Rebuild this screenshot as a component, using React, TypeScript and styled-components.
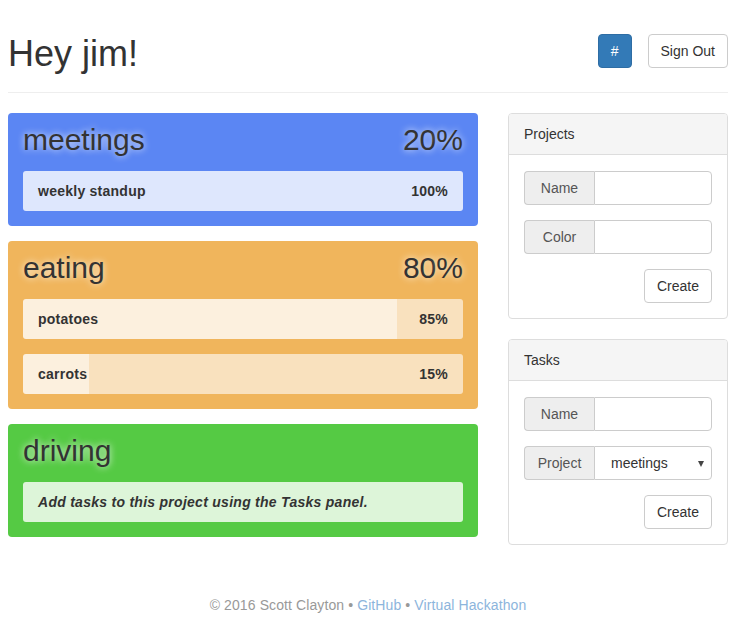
import React from "react";
import styled, { createGlobalStyle } from "styled-components";

const GlobalStyle = createGlobalStyle`
  html, body { margin: 0; padding: 0; background: #fff; }
  body {
    font-family: "Liberation Sans", Arial, Helvetica, sans-serif;
    font-size: 14px;
    line-height: 20px;
    color: #333;
  }
  * { box-sizing: border-box; }
`;

const Page = styled.div`
  padding: 0 9px 0 8px;
`;

const Header = styled.header`
  display: flex;
  justify-content: space-between;
  align-items: flex-start;
  margin-top: 34px;
  padding-bottom: 18px;
  border-bottom: 1px solid #eee;
`;

const Greeting = styled.h1`
  margin: 0;
  font-size: 36px;
  line-height: 40px;
  font-weight: 400;
  color: #333;
`;

const HeaderButtons = styled.div`
  display: flex;
  gap: 16px;
`;

const Button = styled.button<{ $primary?: boolean }>`
  height: 34px;
  padding: 6px 12px;
  font-family: inherit;
  font-size: 14px;
  line-height: 20px;
  border-radius: 4px;
  border: 1px solid ${(p) => (p.$primary ? "#2e6da4" : "#ccc")};
  background: ${(p) => (p.$primary ? "#337ab7" : "#fff")};
  color: ${(p) => (p.$primary ? "#fff" : "#333")};
  cursor: pointer;
`;

const Content = styled.div`
  display: grid;
  grid-template-columns: 470px 220px;
  column-gap: 30px;
  margin-top: 20px;
  align-items: start;
`;

const Column = styled.div`
  display: flex;
  flex-direction: column;
`;

const Card = styled.section<{ $bg: string }>`
  background: ${(p) => p.$bg};
  border-radius: 4px;
  padding: 10px 15px 15px;
  margin-bottom: 15px;
`;

const CardHeader = styled.div`
  display: flex;
  justify-content: space-between;
  align-items: baseline;
  margin-bottom: 15px;
`;

const CardTitle = styled.h2`
  margin: 0;
  font-size: 30px;
  line-height: 33px;
  font-weight: 400;
  color: #333;
  text-shadow: 0 0 7px rgba(255, 255, 255, 0.9);
`;

const TaskList = styled.div`
  display: flex;
  flex-direction: column;
  gap: 15px;
`;

const TaskRow = styled.div`
  display: flex;
  justify-content: space-between;
  height: 40px;
  padding: 10px 15px;
  border-radius: 3px;
  font-weight: 700;
  letter-spacing: 0.25px;
  background:
    linear-gradient(
      to right,
      rgba(255, 255, 255, 0.5) 0,
      rgba(255, 255, 255, 0.5) var(--fill),
      transparent var(--fill)
    ),
    rgba(255, 255, 255, 0.6);
`;

const EmptyRow = styled.div`
  height: 40px;
  padding: 10px 15px;
  border-radius: 3px;
  font-weight: 700;
  font-style: italic;
  letter-spacing: 0.27px;
  background: rgba(255, 255, 255, 0.8);
`;

const Panel = styled.section`
  border: 1px solid #ddd;
  border-radius: 4px;
  margin-bottom: 20px;
  background: #fff;
  overflow: hidden;
`;

const PanelHeading = styled.div`
  padding: 10px 15px;
  background: #f5f5f5;
  border-bottom: 1px solid #ddd;
  color: #333;
`;

const PanelBody = styled.div`
  padding: 16px 15px 15px;
  display: flex;
  flex-direction: column;
  gap: 15px;
`;

const InputGroup = styled.div`
  display: flex;
  height: 34px;
`;

const Addon = styled.span`
  flex: 0 0 70px;
  display: flex;
  align-items: center;
  justify-content: center;
  background: #eee;
  border: 1px solid #ccc;
  border-right: 0;
  border-radius: 4px 0 0 4px;
  color: #555;
`;

const TextInput = styled.input`
  flex: 1;
  min-width: 0;
  height: 34px;
  border: 1px solid #ccc;
  border-radius: 0 4px 4px 0;
  padding: 6px 12px;
  font-family: inherit;
  font-size: 14px;
  color: #555;
  outline: none;
`;

const SelectWrap = styled.div`
  flex: 1;
  position: relative;
  min-width: 0;
  &::after {
    content: "";
    position: absolute;
    right: 8px;
    top: 15px;
    border-left: 3.5px solid transparent;
    border-right: 3.5px solid transparent;
    border-top: 6px solid #444;
    pointer-events: none;
  }
`;

const Select = styled.select`
  width: 100%;
  height: 34px;
  appearance: none;
  -webkit-appearance: none;
  border: 1px solid #ccc;
  border-radius: 0 4px 4px 0;
  padding: 6px 12px 6px 16px;
  background: #fff;
  font-family: inherit;
  font-size: 14px;
  color: #333;
  outline: none;
`;

const Actions = styled.div`
  display: flex;
  justify-content: flex-end;
`;

const Footer = styled.footer`
  text-align: center;
  color: #999;
  padding: 30px 0 10px;
  letter-spacing: 0.1px;
`;

const FooterLink = styled.a`
  color: #8db5dc;
  text-decoration: none;
`;

type Task = { name: string; pct: number };
type Project = { name: string; pct?: number; color: string; tasks: Task[] };

const projects: Project[] = [
  { name: "meetings", pct: 20, color: "#5b86f3", tasks: [{ name: "weekly standup", pct: 100 }] },
  {
    name: "eating",
    pct: 80,
    color: "#f0b55c",
    tasks: [
      { name: "potatoes", pct: 85 },
      { name: "carrots", pct: 15 },
    ],
  },
  { name: "driving", color: "#55ca44", tasks: [] },
];

export default function App() {
  return (
    <>
      <GlobalStyle />
      <Page>
        <Header>
          <Greeting>Hey jim!</Greeting>
          <HeaderButtons>
            <Button $primary>#</Button>
            <Button>Sign Out</Button>
          </HeaderButtons>
        </Header>
        <Content>
          <Column>
            {projects.map((p) => (
              <Card key={p.name} $bg={p.color}>
                <CardHeader>
                  <CardTitle>{p.name}</CardTitle>
                  {p.pct !== undefined && <CardTitle>{p.pct}%</CardTitle>}
                </CardHeader>
                <TaskList>
                  {p.tasks.length === 0 ? (
                    <EmptyRow>Add tasks to this project using the Tasks panel.</EmptyRow>
                  ) : (
                    p.tasks.map((t) => (
                      <TaskRow key={t.name} style={{ ["--fill" as any]: `${t.pct}%` }}>
                        <span>{t.name}</span>
                        <span>{t.pct}%</span>
                      </TaskRow>
                    ))
                  )}
                </TaskList>
              </Card>
            ))}
          </Column>
          <Column>
            <Panel>
              <PanelHeading>Projects</PanelHeading>
              <PanelBody>
                <InputGroup>
                  <Addon>Name</Addon>
                  <TextInput />
                </InputGroup>
                <InputGroup>
                  <Addon>Color</Addon>
                  <TextInput />
                </InputGroup>
                <Actions>
                  <Button>Create</Button>
                </Actions>
              </PanelBody>
            </Panel>
            <Panel>
              <PanelHeading>Tasks</PanelHeading>
              <PanelBody>
                <InputGroup>
                  <Addon>Name</Addon>
                  <TextInput />
                </InputGroup>
                <InputGroup>
                  <Addon>Project</Addon>
                  <SelectWrap>
                    <Select defaultValue="meetings">
                      <option value="meetings">meetings</option>
                      <option value="eating">eating</option>
                      <option value="driving">driving</option>
                    </Select>
                  </SelectWrap>
                </InputGroup>
                <Actions>
                  <Button>Create</Button>
                </Actions>
              </PanelBody>
            </Panel>
          </Column>
        </Content>
        <Footer>
          © 2016 Scott Clayton • <FooterLink href="#">GitHub</FooterLink> •{" "}
          <FooterLink href="#">Virtual Hackathon</FooterLink>
        </Footer>
      </Page>
    </>
  );
}
